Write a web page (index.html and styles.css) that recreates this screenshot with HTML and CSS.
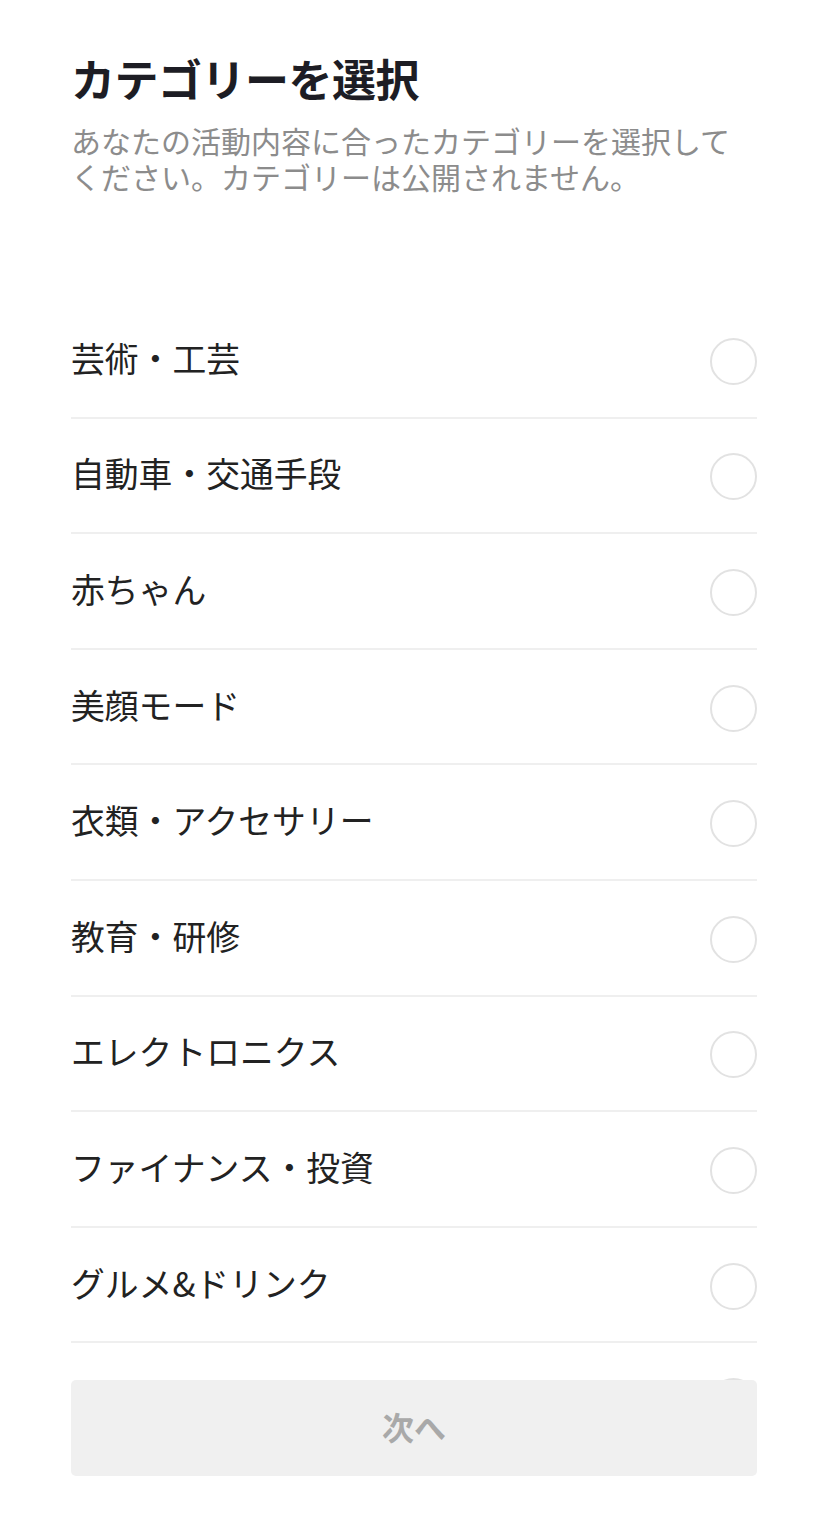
FILE: index.html
```html
<!DOCTYPE html>
<html lang="ja">
<head>
<meta charset="utf-8">
<title>カテゴリーを選択</title>
<link rel="stylesheet" href="styles.css">
</head>
<body>
<main class="page">
  <header class="head">
    <h1 class="title">カテゴリーを選択</h1>
    <p class="desc">あなたの活動内容に合ったカテゴリーを選択してください。カテゴリーは公開されません。</p>
  </header>
  <ul class="list">
    <li class="row"><span class="label">芸術・工芸</span><span class="radio"></span></li>
    <li class="row"><span class="label">自動車・交通手段</span><span class="radio"></span></li>
    <li class="row"><span class="label">赤ちゃん</span><span class="radio"></span></li>
    <li class="row"><span class="label">美顔モード</span><span class="radio"></span></li>
    <li class="row"><span class="label">衣類・アクセサリー</span><span class="radio"></span></li>
    <li class="row"><span class="label">教育・研修</span><span class="radio"></span></li>
    <li class="row"><span class="label">エレクトロニクス</span><span class="radio"></span></li>
    <li class="row"><span class="label">ファイナンス・投資</span><span class="radio"></span></li>
    <li class="row"><span class="label">グルメ&amp;ドリンク</span><span class="radio"></span></li>
    <li class="row"><span class="label">ゲーム</span><span class="radio"></span></li>
  </ul>
</main>
<div class="footer">
  <button class="next" type="button">次へ</button>
</div>
</body>
</html>
```

FILE: styles.css
```css
html, body {
  margin: 0;
  padding: 0;
  background: #ffffff;
}
body {
  font-family: "Noto Sans CJK JP", "Noto Sans", sans-serif;
  height: 1514px;
  overflow: hidden;
}
.page {
  padding: 0 71px;
}
.head {
  padding-top: 46px;
}
.title {
  margin: 0;
  font-size: 44px;
  line-height: 64px;
  font-weight: 700;
  color: #1d1d24;
  letter-spacing: -0.5px;
}
.desc {
  margin: 12px 0 0;
  font-size: 30px;
  line-height: 36px;
  color: #8c8c8c;
}
.list {
  list-style: none;
  margin: 0;
  padding: 0;
  padding-top: 109px;
}
.row {
  display: flex;
  align-items: center;
  justify-content: space-between;
  height: 113.6px;
  border-bottom: 2px solid #efefef;
}
.label {
  font-size: 33.8px;
  color: #222222;
  line-height: 1;
  margin-bottom: 4px;
}
.radio {
  width: 43px;
  height: 43px;
  border: 2.5px solid #e2e2e2;
  border-radius: 50%;
  margin-top: 3px;
  flex: none;
}
.footer {
  position: fixed;
  left: 71px;
  right: 71px;
  bottom: 38px;
}
.next {
  display: block;
  width: 100%;
  height: 96px;
  border: none;
  border-radius: 5px;
  background: #f0f0f0;
  color: #a9a9a9;
  font-family: "Noto Sans CJK JP", "Noto Sans", sans-serif;
  font-size: 32px;
  font-weight: 700;
  line-height: 1;
  padding: 0 0 4px;
}
```
